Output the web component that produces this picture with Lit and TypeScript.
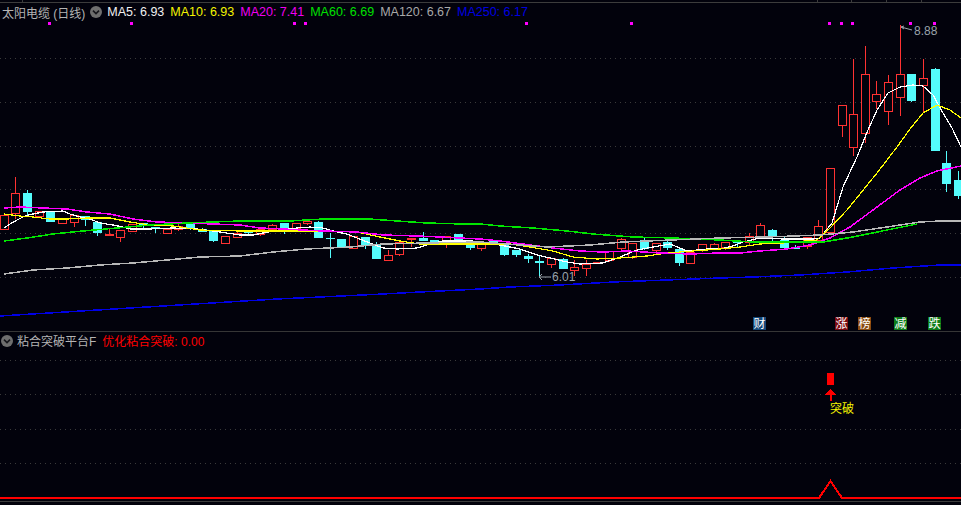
import { LitElement, html, svg, css } from "lit";
import { customElement } from "lit/decorators.js";

type Candle = [number, number, number, number, number, "r" | "c" | "f"];

// center x, body top, body bottom, wick top, wick bottom, kind
const candles: Candle[] = [
  [4, 215, 229, 215, 229, "r"], [15, 193, 213, 177, 219, "r"], [27.5, 193, 212, 190, 215, "c"],
  [39.5, 211, 216, 211, 218, "r"], [50.5, 211, 222, 211, 222, "c"], [62.5, 219, 223, 218, 224, "r"],
  [74.5, 215, 222, 215, 227, "r"], [85.5, 216, 220, 216, 226, "c"], [97.5, 222, 233, 221, 236, "c"],
  [109, 234, 236, 229, 236, "f"], [120.5, 230, 237, 230, 242, "r"], [132.5, 224, 231, 224, 232, "r"],
  [143.5, 223, 225, 223, 229, "c"], [155, 227, 229, 227, 233, "c"], [167, 229, 233, 229, 233, "r"],
  [178.5, 226, 229, 222, 231, "r"], [190.5, 224, 228, 222, 230, "c"], [202.5, 229, 232, 228, 232, "c"],
  [213.5, 231, 241, 231, 242, "c"], [225.5, 236, 243, 236, 243, "r"], [237, 233, 237, 232, 237, "r"],
  [248.5, 231, 233, 230, 235, "c"], [260, 229, 234, 229, 236, "r"], [272, 225, 229, 224, 229, "r"],
  [284, 223, 229, 223, 234, "c"], [296, 223, 228, 223, 229, "r"], [307.5, 221, 223, 221, 225, "r"],
  [318.5, 222, 238, 221, 238, "c"], [330, 238, 239, 233, 258, "c"], [341.5, 239, 248, 239, 248, "c"],
  [353, 236, 248, 236, 249, "r"], [365, 237, 246, 237, 249, "c"], [376.5, 245, 259, 242, 259, "c"],
  [388, 255, 260, 250, 260, "r"], [399.5, 242, 254, 242, 256, "r"], [411, 238, 240, 238, 247, "f"],
  [423, 238, 241, 232, 241, "c"], [434.5, 240, 243, 240, 244, "c"], [446, 236, 242, 236, 248, "r"],
  [458, 234, 241, 234, 243, "c"], [470, 242, 248, 242, 250, "c"], [481, 243, 248, 243, 251, "r"],
  [493, 241, 243, 240, 243, "c"], [504.5, 243, 255, 243, 256, "c"], [516, 250, 255, 250, 257, "c"],
  [528, 256, 259, 254, 263, "c"], [539, 261, 263, 256, 278, "c"], [551, 258, 264, 258, 268, "r"],
  [563, 259, 269, 258, 269, "c"], [574.5, 267, 270, 260, 276, "r"], [586, 264, 268, 260, 276, "r"],
  [597, 262, 264, 262, 264, "f"], [609, 251, 260, 251, 262, "r"], [621, 239, 248, 238, 252, "r"],
  [632.5, 243, 257, 243, 259, "r"], [644, 240, 249, 238, 250, "c"], [656, 243, 250, 243, 252, "r"],
  [667.5, 242, 248, 240, 250, "c"], [679.5, 249, 263, 249, 266, "c"], [690.5, 252, 263, 252, 263, "r"],
  [702.5, 244, 250, 244, 252, "r"], [714, 244, 248, 243, 250, "r"], [725.5, 242, 247, 242, 250, "r"],
  [737.5, 241, 243, 240, 247, "c"], [749, 236, 242, 233, 246, "r"], [760.5, 225, 238, 223, 238, "r"],
  [772.5, 230, 236, 229, 241, "c"], [784, 240, 248, 237, 248, "c"], [795, 248, 249, 245, 249, "c"],
  [807, 237, 246, 237, 249, "r"], [818.5, 226, 240, 220, 240, "r"], [830.5, 168, 232, 168, 232, "r"],
  [842, 105, 125, 105, 137, "r"], [853.5, 114, 147, 59, 156, "r"], [865.5, 74, 133, 46, 143, "r"],
  [876.5, 94, 101, 81, 109, "r"], [888, 82, 111, 75, 125, "r"], [900.5, 74, 97, 25, 116, "r"],
  [911.5, 74, 101, 74, 102, "c"], [923, 78, 85, 59, 112, "r"], [935, 69, 151, 68, 151, "c"],
  [946.5, 163, 184, 151, 192, "c"], [958, 180, 196, 171, 199, "c"],
];

const white = "4,228 10,224 17,220 25,216 33,214 43,212 63,211 70,214 80,217 90,219 100,223 113,225 123,227 130,229 150,229 173,228 197,229 220,232 240,235 253,235 263,233 280,230 297,228 310,227 323,228 337,232 347,234 357,238 370,243 383,248 397,249 417,248 430,244 443,241 473,241 480,243 500,245 520,249 537,255 550,258 567,262 580,264 603,263 620,257 637,250 653,247 670,244 687,251 707,249 720,249 733,246 743,242 760,238 783,239 813,239 820,238 832,223 843,187 857,157 868,130 877,110 888,93 900,87 913,85 923,86 933,95 943,113 952,128 961,147";
const yellow = "4,214 20,216 33,217 50,219 67,219 87,218 110,218 130,222 150,225 173,226 200,230 240,231 273,231 323,231 357,232 380,237 400,241 420,244 473,244 510,244 530,247 553,251 573,257 597,259 620,258 647,256 667,253 693,251 720,249 740,247 760,244 783,243 817,240 830,228 847,210 877,173 897,147 910,129 923,113 937,105 950,110 961,118";
const magenta = "4,208 20,207 43,208 67,209 87,212 110,214 133,219 157,222 187,223 240,225 260,228 283,229 323,231 357,232 383,235 417,236 440,237 480,239 500,241 523,244 553,248 580,251 603,252 627,251 660,253 690,254 720,253 740,253 760,251 787,249 810,245 830,238 850,227 877,207 900,190 920,178 937,171 961,166";
const green = "4,241 27,238 53,234 83,231 117,228 150,225 187,223 213,222 240,221 290,221 323,219 370,219 397,221 427,223 463,224 480,224 500,226 533,228 567,231 593,234 633,237 673,238 720,240 753,242 787,242 823,242 853,237 887,230 917,224";
const gray = "4,274 33,270 67,268 100,265 133,263 167,260 200,257 240,256 273,252 307,249 350,247 383,244 427,243 480,242 547,247 590,245 623,242 720,238 767,237 820,235 853,232 887,227 920,222 940,221 961,221";
const blue = "0,316 277,299 320,297 383,294 420,292 480,289 510,287 560,285 613,282 667,280 720,278 753,277 800,275 847,272 893,268 940,265 961,265";

const maLines = [
  { cls: "white", pts: white }, { cls: "yellow", pts: yellow }, { cls: "magenta", pts: magenta },
  { cls: "green", pts: green }, { cls: "gray", pts: gray }, { cls: "blue", pts: blue },
];

const legend = [
  { cls: "t-white", text: "MA5: 6.93" }, { cls: "t-yellow", text: "MA10: 6.93" },
  { cls: "t-magenta", text: "MA20: 7.41" }, { cls: "t-green", text: "MA60: 6.69" },
  { cls: "t-gray", text: "MA120: 6.67" }, { cls: "t-blue", text: "MA250: 6.17" },
];

const dots = [49.5, 131.5, 294.5, 305.5, 526, 631, 829, 841, 852.5, 910, 934];
const badges = [
  { x: 753, t: "财", cls: "b-blue" }, { x: 835, t: "涨", cls: "b-red" }, { x: 858, t: "榜", cls: "b-brown" },
  { x: 894, t: "减", cls: "b-green" }, { x: 928, t: "跌", cls: "b-green" },
];
const ticks = [22, 817, 851, 886, 921];

@customElement("app-root")
export class AppRoot extends LitElement {
  static styles = css`
    :host {
      display: block;
      width: 961px;
      height: 505px;
      overflow: hidden;
      background: #02020c;
      font-family: "Liberation Sans", "Noto Sans CJK SC", sans-serif;
    }
    svg { display: block; }
    .ruler { width: 961px; height: 3px; }
    .ruler line { stroke: #3c3c3c; stroke-width: 1; shape-rendering: crispEdges; }
    .pane { display: flex; flex-direction: column; }
    .top { height: 328px; }
    .bottom { height: 173px; border-top: 1px solid #363636; }
    .legend {
      display: flex;
      align-items: center;
      flex: none;
      gap: 6px;
      font-size: 12.5px;
      white-space: nowrap;
    }
    .top .legend { height: 18px; padding-left: 2px; }
    .bottom .legend { height: 17px; padding-left: 1px; }
    .name { color: #b4b4b4; font-size: 12px; }
    .chev { width: 12px; height: 12px; flex: none; margin: 0 -1px; }
    .bottom .chev { margin: 0 -2px 0 0; }
    .chev circle { fill: #6e6e6e; }
    .chev path { fill: none; stroke: #17171c; stroke-width: 1.6; }
    .t-white { color: #f0f0f0; }
    .t-yellow { color: #f4f400; }
    .t-magenta { color: #f000f0; }
    .t-green { color: #00e000; }
    .t-gray { color: #a8a8a8; }
    .t-blue { color: #0000e0; }
    .t-red { color: #ff0000; font-size: 12px; }
    .plot { flex: 1; width: 961px; min-height: 0; }
    .grid { stroke: #3a3a3a; stroke-dasharray: 1 4; stroke-width: 1; shape-rendering: crispEdges; }
    .wick-r { stroke: #ff3232; shape-rendering: crispEdges; }
    .wick-c { stroke: #54fcfc; shape-rendering: crispEdges; }
    .body-r { fill: #02020c; stroke: #ff3232; shape-rendering: crispEdges; }
    .body-c { fill: #54fcfc; shape-rendering: crispEdges; }
    .body-f { fill: #ff3232; shape-rendering: crispEdges; }
    .ma { fill: none; stroke-width: 1.5; shape-rendering: crispEdges; }
    .white { stroke: #ffffff; stroke-width: 1.2; }
    .yellow { stroke: #ffff00; stroke-width: 1.2; }
    .magenta { stroke: #ff00ff; }
    .green { stroke: #00e600; }
    .gray { stroke: #b8b8b8; }
    .blue { stroke: #0000e6; }
    .dot { fill: #ff00ff; shape-rendering: crispEdges; }
    .mark { font-size: 12px; fill: #9aa2aa; }
    .mark-line { fill: none; stroke: #9aa2aa; }
    .badge { font-size: 12px; fill: #ffffff; text-anchor: middle; }
    .b-blue { fill: #14487a; }
    .b-red { fill: #7a0a10; }
    .b-brown { fill: #8a4a10; }
    .b-green { fill: #0c7c18; }
    .sig { fill: #ff0000; shape-rendering: crispEdges; }
    .sig-stem { stroke: #ff0000; stroke-width: 2; shape-rendering: crispEdges; }
    .sig-text { font-size: 12px; fill: #f4f400; }
    .base { fill: none; stroke: #ff0000; stroke-width: 2; shape-rendering: crispEdges; }
    .floor { stroke: #3c3c3c; stroke-width: 1; shape-rendering: crispEdges; }
  `;

  chevron() {
    return html`<svg class="chev" viewBox="0 0 12 12">
      <circle cx="6" cy="6" r="6"></circle>
      <path d="M3 4.6 L6 7.6 L9 4.6"></path>
    </svg>`;
  }

  candle([x, top, bottom, wTop, wBottom, kind]: Candle) {
    const wick = kind === "c" ? "wick-c" : "wick-r";
    const bodyCls = kind === "c" ? "body-c" : kind === "f" ? "body-f" : "body-r";
    const cx = Math.floor(x) + 0.5;
    const left = Math.floor(x) - 4;
    return svg`
      <line class=${wick} x1=${cx} x2=${cx} y1=${wTop} y2=${wBottom}></line>
      ${kind === "r"
        ? svg`<rect class=${bodyCls} x=${left + 0.5} y=${top + 0.5} width="8" height=${bottom - top}></rect>`
        : svg`<rect class=${bodyCls} x=${left} y=${top} width="9" height=${Math.max(bottom - top, 1)}></rect>`}
    `;
  }

  render() {
    return html`
      <svg class="ruler" viewBox="0 0 961 3">
        <line x1="0" x2="961" y1="2.5" y2="2.5"></line>
        ${ticks.map((x) => svg`<line x1=${x + 0.5} x2=${x + 0.5} y1="0" y2="2"></line>`)}
      </svg>

      <section class="pane top">
        <div class="legend">
          <span class="name">太阳电缆 (日线)</span>
          ${this.chevron()}
          ${legend.map((l) => html`<span class=${l.cls}>${l.text}</span>`)}
        </div>
        <svg class="plot" viewBox="0 21 961 310">
          ${[58, 102, 146, 189, 233, 277].map(
            (y) => svg`<line class="grid" x1="0" x2="961" y1=${y + 0.5} y2=${y + 0.5}></line>`
          )}
          ${dots.map((x) => svg`<rect class="dot" x=${Math.floor(x) - 1} y="22" width="3" height="3"></rect>`)}
          ${candles.map((c) => this.candle(c))}
          ${maLines.map((m) => svg`<polyline class="ma ${m.cls}" points=${m.pts}></polyline>`)}
          <path class="mark-line" d="M904 26 L901 27 L904 29 M901 27 L912 30"></path>
          <text class="mark" x="914" y="35">8.88</text>
          <path class="mark-line" d="M542 274 L539 277 L542 280 M539 277 L551 277"></path>
          <text class="mark" x="552" y="281">6.01</text>
          ${badges.map(
            (b) => svg`
              <rect class=${b.cls} x=${b.x} y="317" width="13" height="13"></rect>
              <text class="badge" x=${b.x + 6.5} y="328">${b.t}</text>`
          )}
        </svg>
      </section>

      <section class="pane bottom">
        <div class="legend">
          ${this.chevron()}
          <span class="name">粘合突破平台F</span>
          <span class="t-red">优化粘合突破: 0.00</span>
        </div>
        <svg class="plot" viewBox="0 349 961 156">
          ${[360, 394, 429, 463].map(
            (y) => svg`<line class="grid" x1="0" x2="961" y1=${y + 0.5} y2=${y + 0.5}></line>`
          )}
          <rect class="sig" x="827" y="373" width="7" height="12"></rect>
          <path class="sig" d="M830.5 389 L836 394.5 L825.5 394.5 Z"></path>
          <line class="sig-stem" x1="831" x2="831" y1="394" y2="401"></line>
          <text class="sig-text" x="830" y="413">突破</text>
          <polyline class="base" points="0,498 819,498 830.5,481 842,498 961,498"></polyline>
          <line class="floor" x1="0" x2="961" y1="501.5" y2="501.5"></line>
        </svg>
      </section>
    `;
  }
}
